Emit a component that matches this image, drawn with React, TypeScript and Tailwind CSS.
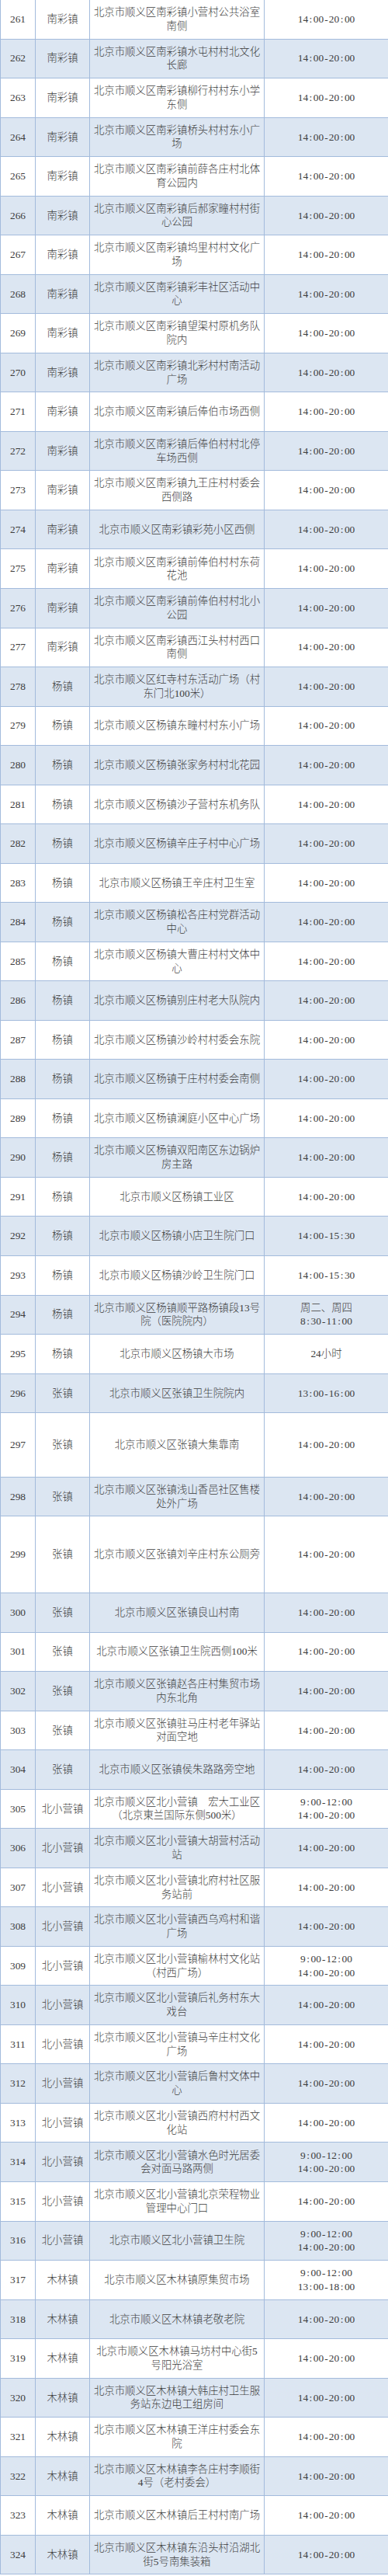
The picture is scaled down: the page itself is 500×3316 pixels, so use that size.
import React from "react";

type Row = { n: number; town: string; addr: string[]; time: string[]; h?: string };

const T = "14:00-20:00";
const D = ["9:00-12:00", "14:00-20:00"];

const rows: Row[] = [
  { n: 261, town: "南彩镇", addr: ["北京市顺义区南彩镇小营村公共浴室", "南侧"], time: [T] },
  { n: 262, town: "南彩镇", addr: ["北京市顺义区南彩镇水屯村村北文化", "长廊"], time: [T] },
  { n: 263, town: "南彩镇", addr: ["北京市顺义区南彩镇柳行村村东小学", "东侧"], time: [T] },
  { n: 264, town: "南彩镇", addr: ["北京市顺义区南彩镇桥头村村东小广", "场"], time: [T] },
  { n: 265, town: "南彩镇", addr: ["北京市顺义区南彩镇前薛各庄村北体", "育公园内"], time: [T] },
  { n: 266, town: "南彩镇", addr: ["北京市顺义区南彩镇后郝家疃村村街", "心公园"], time: [T] },
  { n: 267, town: "南彩镇", addr: ["北京市顺义区南彩镇坞里村村文化广", "场"], time: [T] },
  { n: 268, town: "南彩镇", addr: ["北京市顺义区南彩镇彩丰社区活动中", "心"], time: [T] },
  { n: 269, town: "南彩镇", addr: ["北京市顺义区南彩镇望渠村原机务队", "院内"], time: [T] },
  { n: 270, town: "南彩镇", addr: ["北京市顺义区南彩镇北彩村村南活动", "广场"], time: [T] },
  { n: 271, town: "南彩镇", addr: ["北京市顺义区南彩镇后俸伯市场西侧"], time: [T] },
  { n: 272, town: "南彩镇", addr: ["北京市顺义区南彩镇后俸伯村村北停", "车场西侧"], time: [T] },
  { n: 273, town: "南彩镇", addr: ["北京市顺义区南彩镇九王庄村村委会", "西侧路"], time: [T] },
  { n: 274, town: "南彩镇", addr: ["北京市顺义区南彩镇彩苑小区西侧"], time: [T] },
  { n: 275, town: "南彩镇", addr: ["北京市顺义区南彩镇前俸伯村村东荷", "花池"], time: [T] },
  { n: 276, town: "南彩镇", addr: ["北京市顺义区南彩镇前俸伯村村北小", "公园"], time: [T] },
  { n: 277, town: "南彩镇", addr: ["北京市顺义区南彩镇西江头村村西口", "南侧"], time: [T] },
  { n: 278, town: "杨镇", addr: ["北京市顺义区红寺村东活动广场（村", "东门北100米）"], time: [T] },
  { n: 279, town: "杨镇", addr: ["北京市顺义区杨镇东疃村村东小广场"], time: [T] },
  { n: 280, town: "杨镇", addr: ["北京市顺义区杨镇张家务村村北花园"], time: [T] },
  { n: 281, town: "杨镇", addr: ["北京市顺义区杨镇沙子营村东机务队"], time: [T] },
  { n: 282, town: "杨镇", addr: ["北京市顺义区杨镇辛庄子村中心广场"], time: [T] },
  { n: 283, town: "杨镇", addr: ["北京市顺义区杨镇王辛庄村卫生室"], time: [T] },
  { n: 284, town: "杨镇", addr: ["北京市顺义区杨镇松各庄村党群活动", "中心"], time: [T] },
  { n: 285, town: "杨镇", addr: ["北京市顺义区杨镇大曹庄村村文体中", "心"], time: [T] },
  { n: 286, town: "杨镇", addr: ["北京市顺义区杨镇别庄村老大队院内"], time: [T] },
  { n: 287, town: "杨镇", addr: ["北京市顺义区杨镇沙岭村村委会东院"], time: [T] },
  { n: 288, town: "杨镇", addr: ["北京市顺义区杨镇于庄村村委会南侧"], time: [T] },
  { n: 289, town: "杨镇", addr: ["北京市顺义区杨镇澜庭小区中心广场"], time: [T] },
  { n: 290, town: "杨镇", addr: ["北京市顺义区杨镇双阳南区东边锅炉", "房主路"], time: [T] },
  { n: 291, town: "杨镇", addr: ["北京市顺义区杨镇工业区"], time: [T] },
  { n: 292, town: "杨镇", addr: ["北京市顺义区杨镇小店卫生院门口"], time: ["14:00-15:30"] },
  { n: 293, town: "杨镇", addr: ["北京市顺义区杨镇沙岭卫生院门口"], time: ["14:00-15:30"] },
  { n: 294, town: "杨镇", addr: ["北京市顺义区杨镇顺平路杨镇段13号", "院（医院院内）"], time: ["周二、周四", "8:30-11:00"] },
  { n: 295, town: "杨镇", addr: ["北京市顺义区杨镇大市场"], time: ["24小时"] },
  { n: 296, town: "张镇", addr: ["北京市顺义区张镇卫生院院内"], time: ["13:00-16:00"] },
  { n: 297, town: "张镇", addr: ["北京市顺义区张镇大集靠南"], time: [T], h: "h-[82.7px]" },
  { n: 298, town: "张镇", addr: ["北京市顺义区张镇浅山香邑社区售楼", "处外广场"], time: [T] },
  { n: 299, town: "张镇", addr: ["北京市顺义区张镇刘辛庄村东公厕旁"], time: [T], h: "h-[98.7px]" },
  { n: 300, town: "张镇", addr: ["北京市顺义区张镇良山村南"], time: [T] },
  { n: 301, town: "张镇", addr: ["北京市顺义区张镇卫生院西侧100米"], time: [T] },
  { n: 302, town: "张镇", addr: ["北京市顺义区张镇赵各庄村集贸市场", "内东北角"], time: [T] },
  { n: 303, town: "张镇", addr: ["北京市顺义区张镇驻马庄村老年驿站", "对面空地"], time: [T] },
  { n: 304, town: "张镇", addr: ["北京市顺义区张镇侯朱路路旁空地"], time: [T] },
  { n: 305, town: "北小营镇", addr: ["北京市顺义区北小营镇　宏大工业区", "（北京東兰国际东侧500米）"], time: D },
  { n: 306, town: "北小营镇", addr: ["北京市顺义区北小营镇大胡营村活动", "站"], time: [T] },
  { n: 307, town: "北小营镇", addr: ["北京市顺义区北小营镇北府村社区服", "务站前"], time: [T] },
  { n: 308, town: "北小营镇", addr: ["北京市顺义区北小营镇西乌鸡村和谐", "广场"], time: [T] },
  { n: 309, town: "北小营镇", addr: ["北京市顺义区北小营镇榆林村文化站", "（村西广场）"], time: D },
  { n: 310, town: "北小营镇", addr: ["北京市顺义区北小营镇后礼务村东大", "戏台"], time: [T] },
  { n: 311, town: "北小营镇", addr: ["北京市顺义区北小营镇马辛庄村文化", "广场"], time: [T] },
  { n: 312, town: "北小营镇", addr: ["北京市顺义区北小营镇后鲁村文体中", "心"], time: [T] },
  { n: 313, town: "北小营镇", addr: ["北京市顺义区北小营镇西府村村西文", "化站"], time: [T] },
  { n: 314, town: "北小营镇", addr: ["北京市顺义区北小营镇水色时光居委", "会对面马路两侧"], time: D },
  { n: 315, town: "北小营镇", addr: ["北京市顺义区北小营镇北京荣程物业", "管理中心门口"], time: [T] },
  { n: 316, town: "北小营镇", addr: ["北京市顺义区北小营镇卫生院"], time: D },
  { n: 317, town: "木林镇", addr: ["北京市顺义区木林镇原集贸市场"], time: ["9:00-12:00", "13:00-18:00"] },
  { n: 318, town: "木林镇", addr: ["北京市顺义区木林镇老敬老院"], time: [T] },
  { n: 319, town: "木林镇", addr: ["北京市顺义区木林镇马坊村中心街5", "号阳光浴室"], time: [T] },
  { n: 320, town: "木林镇", addr: ["北京市顺义区木林镇大韩庄村卫生服", "务站东边电工组房间"], time: [T] },
  { n: 321, town: "木林镇", addr: ["北京市顺义区木林镇王洋庄村委会东", "院"], time: [T] },
  { n: 322, town: "木林镇", addr: ["北京市顺义区木林镇李各庄村李顺街", "4号（老村委会）"], time: [T] },
  { n: 323, town: "木林镇", addr: ["北京市顺义区木林镇后王村村南广场"], time: [T] },
  { n: 324, town: "木林镇", addr: ["北京市顺义区木林镇东沿头村沿湖北", "街5号南集装箱"], time: [T] },
];

function Half({ s }: { s: string }) {
  const parts: React.ReactNode[] = [];
  Array.from(s).forEach((c, i) => {
    if (/[0-9:\-]/.test(c)) {
      parts.push(
        <span key={i} className="inline-block w-[6.7px] text-center">
          {c}
        </span>
      );
    } else {
      parts.push(<span key={i}>{c}</span>);
    }
  });
  return <>{parts}</>;
}

export default function App() {
  return (
    <div
      className="w-[500px] bg-white text-[#3d3d3d] text-[13.4px] leading-[17.7px] font-light"
      style={{ fontFamily: '"Liberation Serif", "Noto Sans CJK SC", serif' }}
    >
      {rows.map((r) => {
        const bg = r.n % 2 === 0 ? "bg-[#dce6f2]" : "bg-white";
        return (
          <div
            key={r.n}
            className={`grid grid-cols-[46px_70px_225px_159px] border-b border-[#a3bbdc] ${bg} ${
              r.h ?? "h-[50.54px]"
            }`}
          >
            <div className="flex items-center justify-center border-l border-r border-[#a3bbdc]">
              {r.n}
            </div>
            <div className="flex items-center justify-center border-r border-[#a3bbdc]">
              {r.town}
            </div>
            <div className="flex flex-col items-center justify-center border-r border-[#a3bbdc] px-[3px]">
              {r.addr.map((l, i) => (
                <div key={i} className="whitespace-nowrap text-center">
                  {l}
                </div>
              ))}
            </div>
            <div className="flex flex-col items-center justify-center">
              {r.time.map((l, i) => (
                <div key={i} className="whitespace-nowrap text-center">
                  <Half s={l} />
                </div>
              ))}
            </div>
          </div>
        );
      })}
    </div>
  );
}
